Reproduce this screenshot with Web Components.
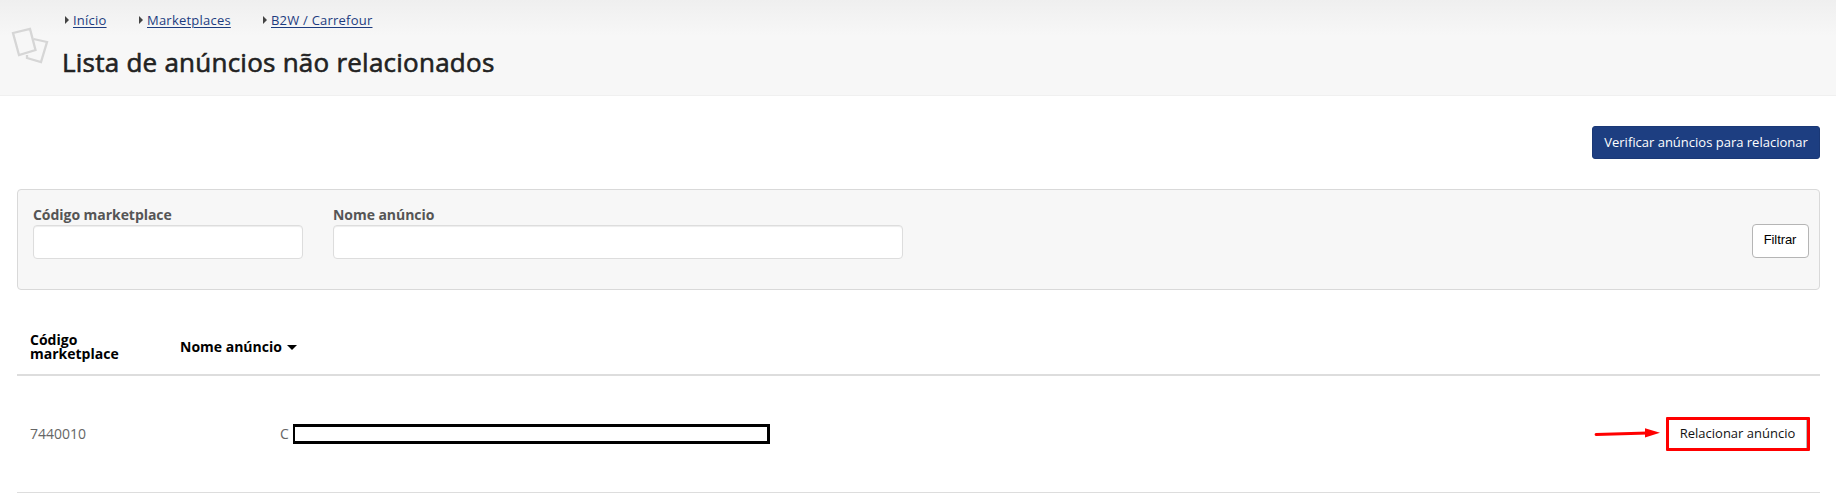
<!DOCTYPE html>
<html lang="pt-BR">
<head>
<meta charset="utf-8">
<title>Lista de anúncios não relacionados</title>
<style>
html,body{margin:0;height:493px;overflow:hidden;background:#fff}
body{font:13px/18px "Open Sans",sans-serif;color:#555}
</style>
</head>
<body>
<listing-page></listing-page>
<script>
function define(name, html){
  const t=document.createElement('template');
  t.innerHTML=html;
  customElements.define(name,class extends HTMLElement{
    constructor(){super();this.attachShadow({mode:'open'}).appendChild(t.content.cloneNode(true));}
  });
}
define('crumb-link',`<style>
:host{display:flex;align-items:center;height:18px}
svg{width:4px;height:8px;margin-right:4px;flex:none}
a{color:#1d3c80;text-decoration:underline;text-underline-offset:2px;text-decoration-thickness:1px;white-space:nowrap;letter-spacing:.22px}
</style><svg viewBox="0 0 4 8"><path d="M0 0L4 4L0 8Z" fill="#444"/></svg><a><slot></slot></a>`);

define('page-header',`<style>
:host{display:flex;box-sizing:border-box;height:96px;background:linear-gradient(#efefef,#f7f7f7 36px);border-bottom:1px solid #f0f0f0;padding-left:11px}
.icon{width:38px;height:38px;margin-top:27px;flex:none}
.text{margin-left:13px}
nav{display:flex;margin:11px 0 0 3px}
crumb-link{width:74px}
crumb-link+crumb-link{width:124px}
h1{margin:15px 0 0;font-size:26px;line-height:36px;font-weight:400;color:#222;white-space:nowrap;letter-spacing:.24px;-webkit-text-stroke:.6px #222}
</style>
<svg class="icon" viewBox="0 0 38 38" fill="none" stroke="#d6d6d6" stroke-width="2.3"><path d="M22.5 12L36 15L30 35L16 31V28"/><path d="M2 6L19 2L24.5 23L8 28Z"/></svg>
<div class="text"><nav><crumb-link>Início</crumb-link><crumb-link>Marketplaces</crumb-link><crumb-link>B2W / Carrefour</crumb-link></nav>
<h1><slot></slot></h1></div>`);

define('primary-button',`<style>
:host{display:block}
button{display:block;box-sizing:border-box;width:228px;height:33px;padding:0 0 1px;border:1px solid #1a3876;border-radius:3px;background:#1d3e81;color:#fff;font:13px/18px "Open Sans",sans-serif;white-space:nowrap}
</style><button><slot></slot></button>`);

define('filter-field',`<style>
:host{display:block}
label{display:block;font-weight:700;font-size:14px;line-height:18px;letter-spacing:-.05px;color:#555;margin-bottom:1px}
input{display:block;box-sizing:border-box;width:100%;height:34px;border:1px solid #ddd;border-radius:4px;background:#fff;box-shadow:inset 0 1px 1px rgba(0,0,0,.075);outline:0}
</style><label><slot></slot></label><input type="text">`);

define('filter-panel',`<style>
:host{display:flex;box-sizing:border-box;height:101px;border:1px solid #d9d9d9;border-radius:4px;background:#f7f7f7;padding:16px 10px 0 15px;align-items:flex-start}
.code{width:270px;margin-right:30px}.name{width:570px}
button{box-sizing:border-box;width:57px;height:34px;margin:18px 0 0 auto;padding:0 1px 3px 0;border:1px solid #b5b5b5;border-radius:4px;background:#fff;color:#000;font:13px/18px "Liberation Sans",sans-serif;letter-spacing:-.1px}
</style><filter-field class="code">Código marketplace</filter-field><filter-field class="name">Nome anúncio</filter-field><button>Filtrar</button>`);

define('table-head',`<style>
:host{display:flex;align-items:center;box-sizing:border-box;height:59px;border-bottom:2px solid #ddd;color:#000;font-weight:700;font-size:14px;line-height:14px;padding:2px 0 0 13px}
.code{width:110px;margin-right:40px}
.name{display:flex;align-items:center}
svg{width:10px;height:5px;margin:1px 0 0 5px}
</style><div class="code">Código marketplace</div><div class="name">Nome anúncio<svg viewBox="0 0 10 5"><path d="M0 0H10L5 5Z"/></svg></div>`);

define('redacted-text',`<style>
:host{display:block;box-sizing:border-box;width:477px;height:20px;border:3px solid #000;border-left-width:2px;background:#fff}
</style>`);

define('link-action',`<style>
:host{display:flex;align-items:center}
svg{width:66px;height:14px;margin:0 6px 3px 0}
button{box-sizing:border-box;width:144px;height:34px;padding:0 1px 2px 0;border:3px solid #f00;border-radius:1px;background:#fff;box-shadow:inset -1px 0 #bbb;color:#111;font:13px/18px "Open Sans",sans-serif;white-space:nowrap}
</style><svg viewBox="0 0 66 14"><path d="M2 8.5L54 7" stroke="#f00" stroke-width="2.8" stroke-linecap="round"/><path d="M51 2.3L66 6.7L51 11.4Z" fill="#f00"/></svg><button><slot></slot></button>`);

define('table-row',`<style>
:host{display:flex;align-items:center;box-sizing:border-box;height:117px;border-bottom:1px solid #ddd;padding:0 10px 0 13px;color:#666;font-size:14px}
.code{width:250px}
.name{display:flex;align-items:center}
.initial{width:13px}
link-action{margin-left:auto}
</style><div class="code">7440010</div><div class="name"><span class="initial">C</span><redacted-text></redacted-text></div><link-action>Relacionar anúncio</link-action>`);

define('listing-page',`<style>
:host{display:block;width:1836px}
main{padding:30px 16px 0 17px}
.actions{display:flex;justify-content:flex-end}
filter-panel{margin-top:30px}
table-head{margin-top:27px}
</style><page-header>Lista de anúncios não relacionados</page-header>
<main><div class="actions"><primary-button>Verificar anúncios para relacionar</primary-button></div>
<filter-panel></filter-panel><table-head></table-head><table-row></table-row></main>`);
</script>
</body>
</html>
